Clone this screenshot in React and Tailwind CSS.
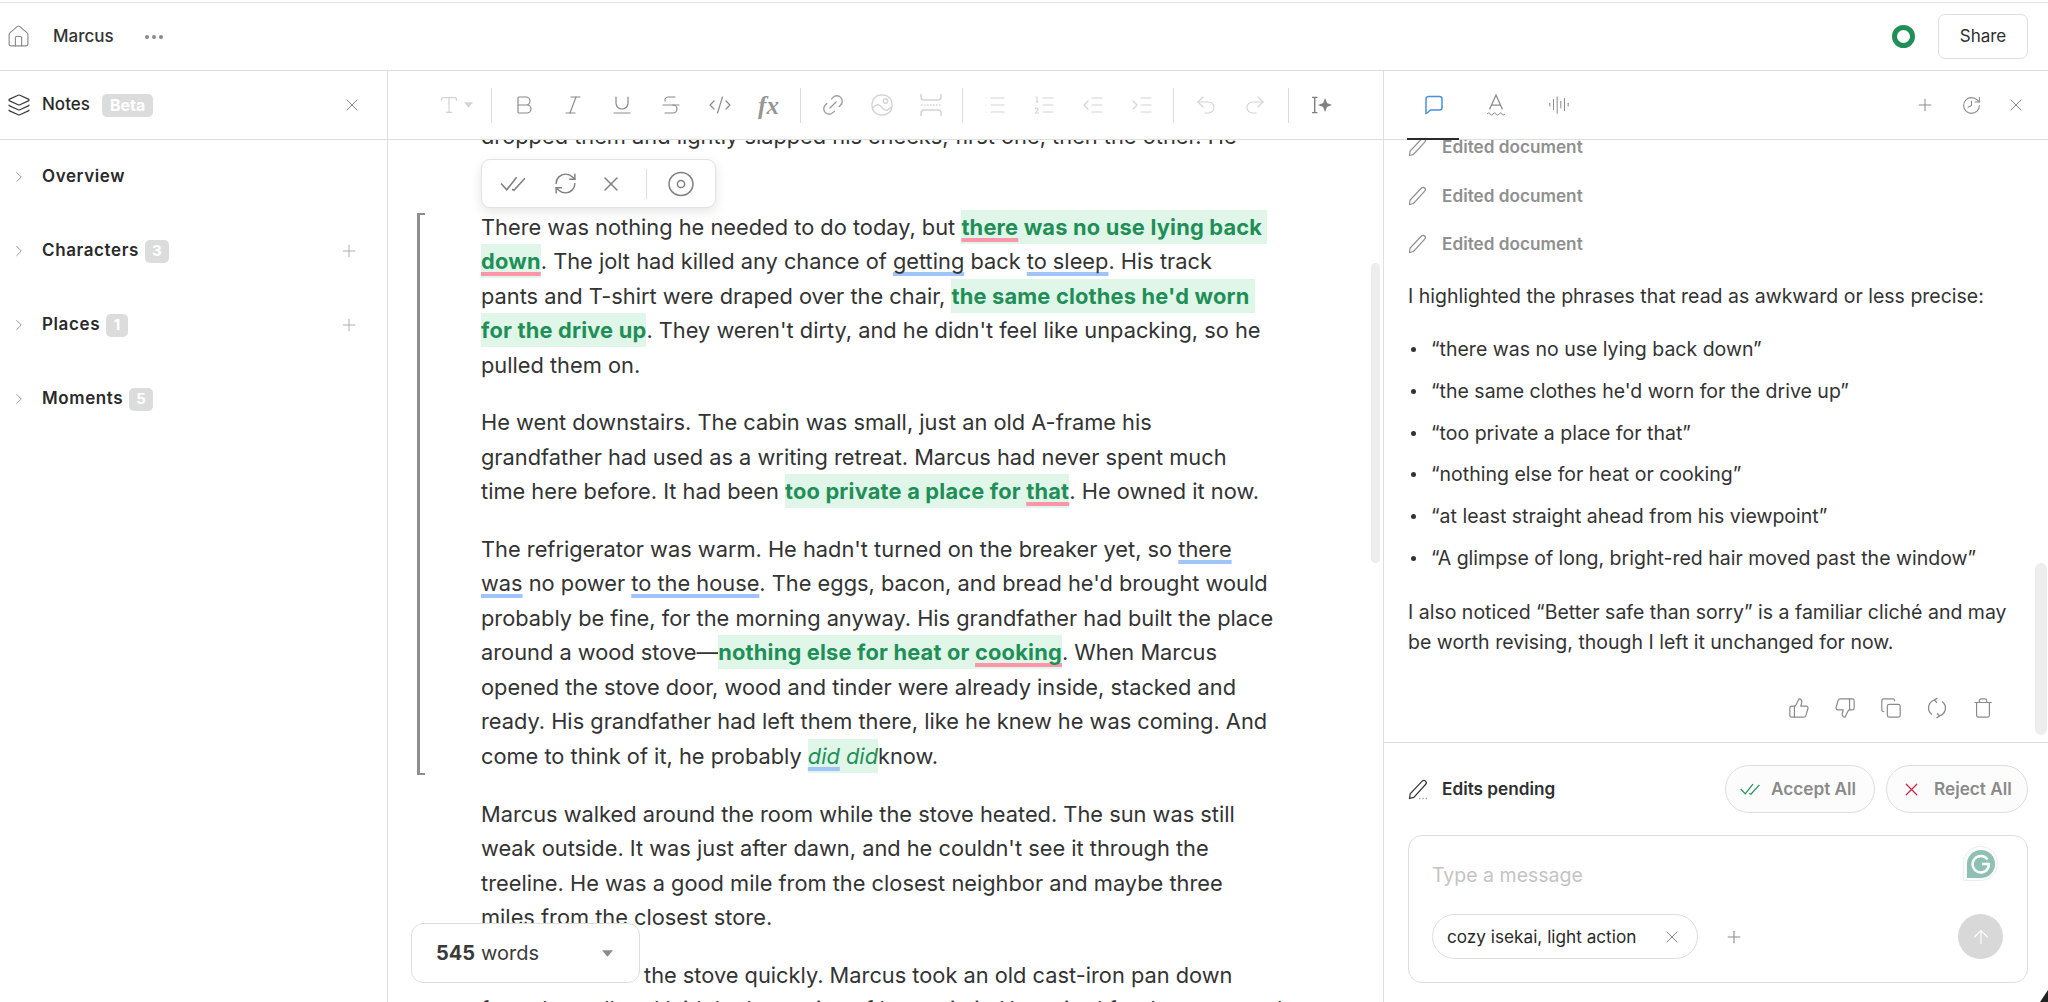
import {
  House,
  Layers,
  X,
  ChevronRight,
  Plus,
  Bold,
  Italic,
  Underline,
  Strikethrough,
  CodeXml,
  Link2,
  List,
  ListOrdered,
  IndentDecrease,
  IndentIncrease,
  Undo2,
  Redo2,
  RefreshCw,
  History,
  AudioLines,
  ThumbsUp,
  ThumbsDown,
  Copy,
  Trash,
  ArrowUp,
  Type,
} from "lucide-react";

const DoubleCheck = ({ className }) => (
  <svg viewBox="0 0 26 16" fill="none" stroke="currentColor" strokeWidth="1.5" className={className}>
    <path d="M1 8l5.5 6L16 2" />
    <path d="M11.5 13.5l2 1L24 3" />
  </svg>
);

const Eye = ({ className }) => (
  <svg viewBox="0 0 26 26" fill="none" stroke="currentColor" strokeWidth="1.5" className={className}>
    <ellipse cx="13" cy="13" rx="12" ry="11.5" />
    <circle cx="13" cy="13" r="3.6" />
  </svg>
);

const ChatBubble = ({ className }) => (
  <svg viewBox="0 0 20 20" fill="none" stroke="currentColor" strokeWidth="1.5" className={className}>
    <path d="M2 4a2.5 2.5 0 0 1 2.5-2.5h11A2.5 2.5 0 0 1 18 4v8.5a2.5 2.5 0 0 1-2.5 2.5H6.5L2.8 18.2 2 18.5z" />
  </svg>
);

const SpellA = ({ className }) => (
  <svg viewBox="0 0 20 24" fill="none" stroke="currentColor" strokeWidth="1.25" className={className}>
    <path d="M3.5 16.5L10 2l6.5 14.5M5.5 12h9" />
    <path d="M1 21c1.5-1.5 2.5-1.5 3 0s2 1.500 3 0 2.500-1.500 3 0 2 1.500 3 0 2.500-1.500 3 0 1.500 1 3 0" strokeWidth="1" />
  </svg>
);

const PageBreak = ({ className }) => (
  <svg viewBox="0 0 24 24" fill="none" stroke="currentColor" strokeWidth="1.5" className={className}>
    <path d="M2 1v3a3 3 0 0 0 3 3h14a3 3 0 0 0 3-3V1M2 23v-3a3 3 0 0 1 3-3h14a3 3 0 0 1 3 3v3" />
    <path d="M2 12h20" strokeDasharray="1.500 1.500" />
  </svg>
);

const PictureIcon = ({ className }) => (
  <svg viewBox="0 0 24 24" fill="none" stroke="currentColor" strokeWidth="1.4" className={className}>
    <rect x="2" y="2" width="20" height="20" rx="9" />
    <circle cx="15.500" cy="8" r="2.200" />
    <path d="M3 15c3-4 6-4 8-1.500s3 4.500 6 3.500 3.500-2 4.500-3" />
  </svg>
);

const RoundRefresh = ({ className }) => (
  <svg viewBox="0 0 22 22" fill="none" stroke="currentColor" strokeWidth="1.300" className={className}>
    <path d="M8.500 3.200A8 8 0 0 0 6 17.500" />
    <path d="M13.500 18.800A8 8 0 0 0 16 4.500" />
    <path d="M11.500 1L8.500 3.200l2.500 2.600M10.500 21l3-2.200-2.500-2.600" />
  </svg>
);

const Fx = () => (
  <span className="font-['Liberation_Serif',serif] italic font-bold text-[25px] text-[#969696] leading-none">
    fx
  </span>
);

const AiCursor = () => (
  <svg viewBox="0 0 24 20" fill="none" stroke="#7f7f7f" strokeWidth="1.600" className="w-[22px] h-[18px]">
    <path d="M2 1.500h6M2 18.500h6M5 1.500v17" />
    <path d="M16.500 4.500l1.600 4 4 1.500-4 1.500-1.600 4-1.600-4-4-1.500 4-1.500z" fill="#7f7f7f" />
  </svg>
);

const ThinPencil = ({ dots, className }) => (
  <svg viewBox="0 0 20 20" fill="none" stroke="currentColor" strokeWidth="1.200" className={className}>
    <path d="M1.500 18.500l.6-4.500L13.500 2a2.200 2.200 0 0 1 3.200 0 2.300 2.300 0 0 1 0 3.200L5.500 17.500z" />
    {dots && <path d="M11 18.500h.6M14 18.500h.6M17 18.500h.6" strokeWidth="1.400" />}
  </svg>
);

const Grammarly = () => (
  <div className="absolute left-[554px] top-[10px] w-[35px] h-[35px] rounded-full rounded-bl-none bg-white border border-[#e8eeee] flex items-center justify-center">
    <svg viewBox="0 0 30 30" className="w-[30px] h-[30px]">
      <path d="M15 1a14 14 0 0 1 0 28H1V15A14 14 0 0 1 15 1z" fill="#8fc0b4" />
      <path
        d="M21.500 10.500A8.200 8.200 0 1 0 23 15h-7"
        fill="none"
        stroke="#fff"
        strokeWidth="2.400"
      />
    </svg>
  </div>
);

// highlighted replacement text
const Hl = ({ children, className = "" }) => (
  <span className={`bg-[#dff6e9] text-[#1f8f57] font-bold tracking-[0.2px] py-[4px] ${className}`}>{children}</span>
);

const Pink = ({ children }) => (
  <span className="underline decoration-[#ff95a8] decoration-[4px] underline-offset-[3px] [text-decoration-skip-ink:none]">
    {children}
  </span>
);

const Blue = ({ children }) => (
  <span className="underline decoration-[#a0c4f8] decoration-[4px] underline-offset-[3px] [text-decoration-skip-ink:none]">
    {children}
  </span>
);

const ToolBtn = ({ children }) => (
  <div className="w-[49px] flex items-center justify-center shrink-0">{children}</div>
);

const Sep = () => <div className="mx-[7px] w-px h-[35px] bg-[#dcdcdc] shrink-0" />;

const Toolbar = () => {
  const dark = "w-[24px] h-[24px] text-[#8a8a8a]";
  const light = "w-[24px] h-[24px] text-[#d4d4d4]";
  return (
    <div className="h-[69px] border-b border-[#dedede] flex items-center shrink-0">
      <div className="w-[96px] pl-[50px] flex items-center gap-[4px] shrink-0 text-[#d4d4d4]">
        <Type className="w-[22px] h-[22px]" strokeWidth={1.300} />
        <svg viewBox="0 0 10 6" className="w-[9px] h-[6px]" fill="currentColor">
          <path d="M0 0h10L5 6z" />
        </svg>
      </div>
      <Sep />
      <ToolBtn><Bold className={dark} strokeWidth={1.200} /></ToolBtn>
      <ToolBtn><Italic className={dark} strokeWidth={1.200} /></ToolBtn>
      <ToolBtn><Underline className={dark} strokeWidth={1.200} /></ToolBtn>
      <ToolBtn><Strikethrough className={dark} strokeWidth={1.200} /></ToolBtn>
      <ToolBtn><CodeXml className={dark} strokeWidth={1.200} /></ToolBtn>
      <ToolBtn><Fx /></ToolBtn>
      <Sep />
      <ToolBtn><Link2 className="w-[26px] h-[26px] text-[#9a9a9a] -rotate-45" strokeWidth={1.200} /></ToolBtn>
      <ToolBtn><PictureIcon className={light} /></ToolBtn>
      <ToolBtn><PageBreak className={light} /></ToolBtn>
      <Sep />
      <ToolBtn><List className={light} strokeWidth={1.200} /></ToolBtn>
      <ToolBtn><ListOrdered className={light} strokeWidth={1.200} /></ToolBtn>
      <ToolBtn><IndentDecrease className={light} strokeWidth={1.200} /></ToolBtn>
      <ToolBtn><IndentIncrease className={light} strokeWidth={1.200} /></ToolBtn>
      <Sep />
      <ToolBtn><Undo2 className={light} strokeWidth={1.200} /></ToolBtn>
      <ToolBtn><Redo2 className={light} strokeWidth={1.200} /></ToolBtn>
      <div className="ml-[2px]"><Sep /></div>
      <ToolBtn><AiCursor /></ToolBtn>
    </div>
  );
};

const SidebarItem = ({ label, count, canAdd }) => (
  <div className="h-[24px] flex items-center">
    <ChevronRight className="w-[18px] h-[18px] ml-[10px] text-[#8a8a8a]" strokeWidth={1.200} />
    <span className="ml-[14px] text-[17px] font-semibold tracking-[0.6px] text-[#2a2a2a]">{label}</span>
    {count && (
      <span className="ml-[6px] min-w-[22px] h-[23px] px-[7px] rounded-[5px] bg-[#dcdcdc] text-white text-[15px] font-bold flex items-center justify-center">
        {count}
      </span>
    )}
    {canAdd && <Plus className="ml-auto mr-[28px] w-[20px] h-[20px] text-[#b0b0b0]" strokeWidth={1.200} />}
  </div>
);

const Sidebar = () => (
  <aside className="w-[388px] shrink-0 border-r border-[#dedede] flex flex-col">
    <div className="h-[69px] border-b border-[#dedede] flex items-center shrink-0">
      <Layers className="w-[24px] h-[24px] ml-[7px] text-[#3a3a3a]" strokeWidth={1.200} />
      <span className="ml-[11px] text-[17px] font-medium text-[#2a2a2a]">Notes</span>
      <span className="ml-[12px] h-[23px] px-[8px] rounded-[5px] bg-[#dcdcdc] text-white text-[16px] font-bold flex items-center">
        Beta
      </span>
      <X className="ml-auto mr-[25px] w-[20px] h-[20px] text-[#8a8a8a]" strokeWidth={1.200} />
    </div>
    <div className="pt-[25px] flex flex-col gap-[50px]">
      <SidebarItem label="Overview" />
      <SidebarItem label="Characters" count="3" canAdd />
      <SidebarItem label="Places" count="1" canAdd />
      <SidebarItem label="Moments" count="5" />
    </div>
  </aside>
);

const Editor = () => (
  <main className="w-[996px] shrink-0 border-r border-[#dedede] flex flex-col min-h-0">
    <Toolbar />
    <div className="relative flex-1 overflow-hidden">
      <div className="-mt-[20.700px] pl-[93px] text-[21.800px] leading-[34.500px] text-[#333] whitespace-nowrap">
        <p>dropped them and lightly slapped his cheeks, first one, then the other. He</p>
        <p className="mt-[55.800px]">
          There was nothing he needed to do today, but{" "}
          <Hl className="pr-[5px]"><Pink>there</Pink> was no use lying back</Hl>
          <br />
          <Hl><Pink>down</Pink></Hl>. The jolt had killed any chance of <Blue>getting</Blue> back <Blue>to sleep</Blue>. His track
          <br />
          pants and T-shirt were draped over the chair,{" "}
          <Hl className="pr-[5px]">the same clothes he'd worn</Hl>
          <br />
          <Hl>for the drive up</Hl>. They weren't dirty, and he didn't feel like unpacking, so he
          <br />
          pulled them on.
        </p>
        <p className="mt-[23px]">
          He went downstairs. The cabin was small, just an old A-frame his
          <br />
          grandfather had used as a writing retreat. Marcus had never spent much
          <br />
          time here before. It had been <Hl>too private a place for <Pink>that</Pink></Hl>. He owned it now.
        </p>
        <p className="mt-[23px]">
          The refrigerator was warm. He hadn't turned on the breaker yet, so <Blue>there</Blue>
          <br />
          <Blue>was</Blue> no power <Blue>to the house</Blue>. The eggs, bacon, and bread he'd brought would
          <br />
          probably be fine, for the morning anyway. His grandfather had built the place
          <br />
          around a wood stove—<Hl>nothing else for heat or <Pink>cooking</Pink></Hl>. When Marcus
          <br />
          opened the stove door, wood and tinder were already inside, stacked and
          <br />
          ready. His grandfather had left them there, like he knew he was coming. And
          <br />
          come to think of it, he probably{" "}
          <span className="bg-[#dff6e9] text-[#1f8f57] italic py-[4px]"><Blue>did</Blue> did</span>know.
        </p>
        <p className="mt-[23.500px]">
          Marcus walked around the room while the stove heated. The sun was still
          <br />
          weak outside. It was just after dawn, and he couldn't see it through the
          <br />
          treeline. He was a good mile from the closest neighbor and maybe three
          <br />
          miles from the closest store.
        </p>
        <p className="mt-[23.200px]">
          <span className="inline-block w-[163px]">He heated</span>the stove quickly. Marcus took an old cast-iron pan down
          <br />
          from the wall and laid the last strips of bacon in it. He waited for the stove and
        </p>
      </div>

      {/* change marker next to the edited block */}
      <div className="absolute left-[29px] top-[73px] w-[8px] h-[562px] border-l-[3px] border-y-2 border-[#8e8e8e]" />

      {/* floating review bubble */}
      <div className="absolute left-[93px] top-[19px] w-[235px] h-[49px] bg-white border border-[#e2e2e2] rounded-[9px] shadow-[0_4px_12px_rgba(0,0,0,0.1)] flex items-center text-[#7f7f7f]">
        <DoubleCheck className="ml-[18px] w-[27px] h-[17px]" />
        <RefreshCw className="ml-[26px] w-[25px] h-[25px]" strokeWidth={1.400} />
        <X className="ml-[21px] w-[24px] h-[24px]" strokeWidth={1.400} />
        <div className="ml-[23px] w-px h-[30px] bg-[#dcdcdc]" />
        <Eye className="ml-[21px] w-[26px] h-[26px]" />
      </div>

      {/* word counter */}
      <div className="absolute left-[23px] top-[783px] w-[229px] h-[60px] bg-white border border-[#dedede] rounded-[12px] flex items-center pl-[24px] text-[20px] text-[#3a3a3a]">
        <span className="font-bold">545</span>
        <span className="ml-[6px]">words</span>
        <svg viewBox="0 0 10 6" className="absolute right-[26px] top-[26px] w-[11px] h-[7px]" fill="#8a8a8a">
          <path d="M0 0h10L5 6z" />
        </svg>
      </div>

      <div className="absolute left-[983px] top-[123px] w-[9px] h-[300px] rounded-full bg-[#ededed]" />
    </div>
  </main>
);

const EditedRow = () => (
  <div className="h-[24px] flex items-center text-[#8f8f8f]">
    <ThinPencil className="w-[20px] h-[20px]" />
    <span className="ml-[14px] text-[17.200px] font-semibold">Edited document</span>
  </div>
);

const quotes = [
  "there was no use lying back down",
  "the same clothes he'd worn for the drive up",
  "too private a place for that",
  "nothing else for heat or cooking",
  "at least straight ahead from his viewpoint",
  "A glimpse of long, bright-red hair moved past the window",
];

const ChatPanel = () => (
  <section className="relative flex-1 min-w-0 flex flex-col">
    <div className="h-[69px] border-b border-[#dedede] flex items-center shrink-0 relative">
      <ChatBubble className="ml-[40px] w-[20px] h-[20px] text-[#4a90e2]" />
      <SpellA className="ml-[42px] w-[20px] h-[24px] text-[#8a8a8a]" />
      <AudioLines className="ml-[42px] w-[22px] h-[24px] text-[#8a8a8a]" strokeWidth={1.100} />
      <Plus className="ml-auto w-[20px] h-[20px] text-[#8a8a8a]" strokeWidth={1.200} />
      <History className="ml-[26px] w-[21px] h-[21px] text-[#8a8a8a] -scale-x-100" strokeWidth={1.200} />
      <X className="ml-[24px] mr-[22px] w-[20px] h-[20px] text-[#8a8a8a]" strokeWidth={1.200} />
      <div className="absolute left-[23px] -bottom-px w-[52px] h-[2px] bg-[#2a2a2a]" />
    </div>

    <div className="relative flex-1 overflow-hidden pl-[24px] pr-[42px] text-[19.500px] leading-[30px] text-[#333]">
      <div className="-mt-[5px] flex flex-col gap-[24.500px]">
        <EditedRow />
        <EditedRow />
        <EditedRow />
      </div>
      <p className="mt-[25px] whitespace-nowrap">I highlighted the phrases that read as awkward or less precise:</p>
      <ul className="mt-[23px] flex flex-col gap-[11.800px]">
        {quotes.map((q) => (
          <li key={q} className="flex whitespace-nowrap">
            <span className="w-[5px] h-[5px] mt-[13px] ml-[3px] rounded-full bg-[#333] shrink-0" />
            <span className="ml-[15px]">“{q}”</span>
          </li>
        ))}
      </ul>
      <p className="mt-[24px] whitespace-nowrap">
        I also noticed “Better safe than sorry” is a familiar cliché and may
        <br />
        be worth revising, though I left it unchanged for now.
      </p>
      <div className="mt-[40px] flex justify-end text-[#8a8a8a]">
        {[ThumbsUp, ThumbsDown, Copy, RoundRefresh, Trash].map((Ic, i) => (
          <div key={i} className="w-[46px] flex justify-center">
            <Ic className="w-[22px] h-[22px]" strokeWidth={1.300} />
          </div>
        ))}
      </div>
      <div className="absolute right-[1px] top-[423px] bottom-[7px] w-[12px] rounded-full bg-[#ededed]" />
    </div>

    <div className="h-[260px] shrink-0 border-t border-[#dedede] pl-[24px] pr-[20px]">
      <div className="mt-[22px] h-[48px] flex items-center">
        <ThinPencil dots className="w-[21px] h-[21px] text-[#3a3a3a]" />
        <span className="ml-[13px] text-[17.200px] font-semibold text-[#2e2e2e]">Edits pending</span>
        <button className="ml-auto w-[150px] h-[48px] rounded-full border border-[#dedede] bg-[#fcfcfc] flex items-center pl-[14px] text-[17.200px] font-semibold text-[#8a8a8a]">
          <DoubleCheck className="w-[21px] h-[14px] text-[#1f8f57]" />
          <span className="ml-[10px]">Accept All</span>
        </button>
        <button className="ml-[11px] w-[142px] h-[48px] rounded-full border border-[#dedede] bg-[#fcfcfc] flex items-center pl-[14px] text-[17.200px] font-semibold text-[#8a8a8a]">
          <X className="w-[21px] h-[21px] text-[#d0264a]" strokeWidth={1.500} />
          <span className="ml-[12px]">Reject All</span>
        </button>
      </div>
      <div className="relative mt-[22px] h-[148px] rounded-[14px] border border-[#dedede] pt-[26px] pb-[23px] pl-[23px] pr-[24px] flex flex-col justify-between">
        <span className="text-[19.500px] leading-[27px] text-[#c4c4c4]">Type a message</span>
        <Grammarly />
        <div className="flex items-center">
          <div className="w-[266px] h-[45px] rounded-full border border-[#dedede] flex items-center pl-[14px] text-[17.200px] text-[#2a2a2a]">
            cozy isekai, light action
            <X className="ml-auto mr-[15px] w-[20px] h-[20px] text-[#8a8a8a]" strokeWidth={1.200} />
          </div>
          <Plus className="ml-[26px] w-[20px] h-[20px] text-[#8a8a8a]" strokeWidth={1.300} />
          <div className="ml-auto w-[45px] h-[45px] rounded-full bg-[#d8d8d8] flex items-center justify-center">
            <ArrowUp className="w-[22px] h-[22px] text-white" strokeWidth={1.200} />
          </div>
        </div>
      </div>
    </div>

    {/* tip of the mouse pointer in the corner */}
    <svg viewBox="0 0 8 12" className="absolute right-0 bottom-0 w-[8px] h-[12px]">
      <path d="M8 0v12H0z" fill="#222" />
    </svg>
  </section>
);

export default function App() {
  return (
    <div className="h-screen w-full overflow-hidden bg-white flex flex-col font-['Inter',sans-serif] pt-[2px]">
      <div className="border-t border-[#e4e4e4] shrink-0" />
      <header className="h-[68px] border-b border-[#dedede] flex items-center shrink-0">
        <House className="ml-[6px] w-[25px] h-[25px] text-[#8a8a8a]" strokeWidth={1.100} />
        <span className="ml-[22px] text-[17px] font-medium text-[#333]">Marcus</span>
        <div className="ml-[31px] flex gap-[3px]">
          <span className="w-[4px] h-[4px] rounded-full bg-[#8a8a8a]" />
          <span className="w-[4px] h-[4px] rounded-full bg-[#8a8a8a]" />
          <span className="w-[4px] h-[4px] rounded-full bg-[#8a8a8a]" />
        </div>
        <div className="ml-auto w-[23px] h-[23px] rounded-full border-[5px] border-[#1f8f57]" />
        <button className="ml-[23px] mr-[20px] w-[90px] h-[45px] rounded-[7px] border border-[#dedede] text-[17px] text-[#2e2e2e]">
          Share
        </button>
      </header>
      <div className="flex-1 flex min-h-0">
        <Sidebar />
        <Editor />
        <ChatPanel />
      </div>
    </div>
  );
}
